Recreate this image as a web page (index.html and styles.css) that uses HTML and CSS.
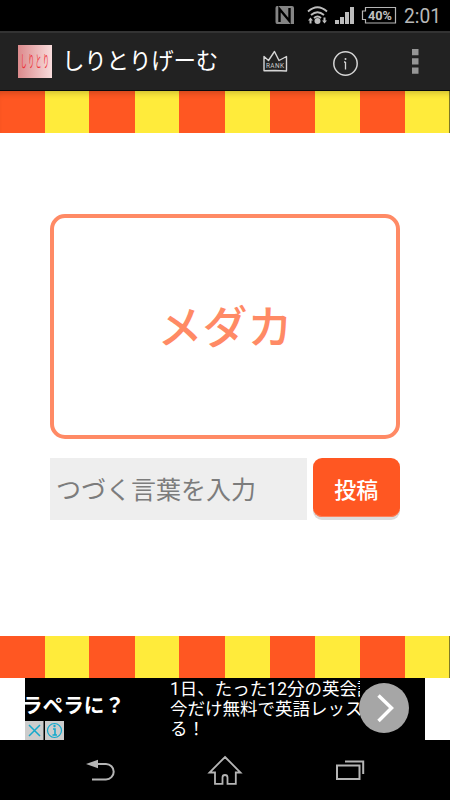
FILE: index.html
```html
<!DOCTYPE html>
<html lang="ja">
<head>
<meta charset="utf-8">
<title>しりとりげーむ</title>
<link rel="stylesheet" href="styles.css">
</head>
<body>
<div class="screen">
  <div class="status">
    <svg width="190" height="31" viewBox="0 0 190 31">
      <path d="M17 6H32Q34 6 34 8V24H17Q15.500 24 15.500 22V8Q15.500 6 17 6Z" fill="#858585"/>
      <path d="M19.500 22V9L29.500 21V8" fill="none" stroke="#000" stroke-width="2.400"/>
      <g fill="none" stroke="#bdbdbd" stroke-width="1.800"><path d="M48 11.500Q57.500 3 67 11.500M51 15Q57.500 9.500 64 15M54 18Q57.500 15 61 18"/></g>
      <circle cx="57.500" cy="21" r="3" fill="#bdbdbd"/>
      <path d="M50.500 17.500L53 20.500H51.500V23.500H49.500V20.500H48ZM64.500 23.500L62 20.500H63.500V17.500H65.500V20.500H67Z" fill="#bdbdbd"/>
      <path d="M75 20h4v4h-4zM80 17h4v7h-4zM85 12h4v12h-4zM90 7h4v17h-4z" fill="#bdbdbd"/>
      <path d="M105.500 7.500H135.500V23H105.500V19.500H102.500V11H105.500Z" fill="none" stroke="#b5b5b5" stroke-width="1.200"/>
      <text x="108" y="19.500" class="battery" textLength="24" lengthAdjust="spacingAndGlyphs">40%</text>
      <text x="144" y="23.300" class="clock" textLength="37" lengthAdjust="spacingAndGlyphs">2:01</text>
    </svg>
  </div>
  <header class="bar">
    <div class="logo"><svg width="34" height="33" viewBox="0 0 34 33"><text x="5" y="0" class="logo-text" textLength="50" transform="translate(0 22) scale(.56 1.500)">しりとり</text></svg></div>
    <h1 class="title">しりとりげーむ</h1>
    <svg class="actions" width="220" height="58" viewBox="0 0 220 58">
      <g fill="none" stroke="#d5d5d5" stroke-width="1.400" stroke-linejoin="round">
        <path d="M34 23.500L38.500 27.500L44.500 18.500L49 27.500L56.500 23.500V38L45 37.500L34 37.700Z"/>
        <circle cx="115.500" cy="30.500" r="11.700" stroke-width="1.500"/>
        <path d="M115.500 29V36.500M114 29H115.500" stroke-width="1.300"/>
      </g>
      <circle cx="115.500" cy="26" r="1" fill="#d5d5d5"/>
      <text x="36" y="35" class="rank" textLength="18">RANK</text>
      <path d="M182 16h6.500v6.300H182zM182 25.200h6.500v6.300H182zM182 34.500h6.500v6.300H182z" fill="#969696"/>
    </svg>
  </header>
  <div class="stripes shaded"></div>
  <main class="game">
    <div class="word">メダカ</div>
    <div class="entry">
      <div class="field">つづく言葉を入力</div>
      <button class="send">投稿</button>
    </div>
  </main>
  <div class="stripes"></div>
  <div class="ad">
    <div class="ad-left">
      <div class="ad-head">ラペラに？</div>
      <svg class="badges" width="39" height="19" viewBox="0 0 39 19">
        <path d="M0 0h18.500v19H0zM20 0h19v19H20z" fill="#ccc"/>
        <g fill="none" stroke="#13a9cc" stroke-width="1.500"><path d="M4 4L15 15M15 4L4 15"/><circle cx="29.500" cy="9.500" r="7" stroke-width="1.200"/><path d="M28 8H30V14M27.500 14H32" stroke-width="1.600"/></g>
        <circle cx="29.500" cy="5" r="1.200" fill="#13a9cc"/>
      </svg>
    </div>
    <div class="ad-copy">1日、たった12分の英会話<br>今だけ無料で英語レッスン<br>る！</div>
    <svg class="ad-go" width="50" height="50" viewBox="0 0 50 50"><circle cx="25" cy="25" r="25" fill="#a6a6a6"/><path d="M19.500 12.500L32.500 25L19.500 38" fill="none" stroke="#fff" stroke-width="3.500"/></svg>
  </div>
  <nav class="nav">
    <svg width="450" height="60" viewBox="0 0 450 60">
      <g fill="none" stroke="#b5b5b5" stroke-width="2">
        <path d="M96 24H106A7.700 7.700 0 0 1 106 39.400H92"/>
        <path d="M225 17L240.500 32.500H235.800V43.800H227.500V37.500Q227.500 35 225 35Q222.500 35 222.500 37.500V43.800H215V32.500H209.500Z" stroke-width="1.800"/>
        <path d="M337 25.500H359.500V39H337ZM345 21.500H363.200V34"/>
      </g>
      <path d="M86 24L98 19.800V28.200Z" fill="#b5b5b5"/>
    </svg>
  </nav>
</div>
</body>
</html>
```
FILE: styles.css
```css
* { box-sizing: border-box; }
body { margin: 0; background: #fff; font-family: Roboto, "Noto Sans CJK JP", sans-serif; }
svg { display: block; flex: none; }
.screen { width: 450px; height: 800px; display: flex; flex-direction: column; overflow: hidden; }
.status { height: 31px; background: #000; display: flex; justify-content: flex-end; }
.battery { font: 700 12px Roboto, sans-serif; fill: #c0c0c0; }
.clock { font: 400 20.500px Roboto, sans-serif; fill: #b8b8b8; }
.bar { height: 60px; background: #222; border-top: 2px solid #333; border-bottom: 1px solid #07090d; display: flex; align-items: center; padding-left: 18px; }
.logo { width: 34px; height: 33px; margin-top: 0; background: linear-gradient(to right, #dc8a8c, #f8dcdc); }
.logo-text { font: 400 10.500px "Noto Sans CJK JP", sans-serif; fill: #ee3038; }
.rank { font: 400 6.500px Roboto, sans-serif; fill: #c8c8c8; }
.title { margin: 0 0 1px; padding-left: 10px; width: 178px; font-size: 22.500px; font-weight: 400; line-height: 32px; color: #fff; white-space: nowrap; letter-spacing: -.2px; }
.stripes { height: 42px; flex: none; background: linear-gradient(to right, transparent 449px, #807a25 449px), repeating-linear-gradient(to right, #ff5722 0 44.600px, #ffeb3b 44.600px 89.500px, #ff5722 89.500px 90px); }
.shaded { box-shadow: inset 0 6px 6px -4px rgba(0, 0, 0, .2); }
.game { height: 503px; padding: 81px 50px 0; }
.word { height: 225px; border: 4px solid #ff8a65; border-radius: 15px; color: #ff8a65; font-size: 45px; font-weight: 500; line-height: 221px; text-align: center; }
.entry { display: flex; gap: 6px; margin-top: 19px; }
.field { width: 256.500px; height: 62px; background: #eee; color: #7c7c7c; padding-left: 6px; font-size: 25px; line-height: 65px; white-space: nowrap; }
.send { width: 87.500px; height: 59px; padding: 0; border: 0; border-radius: 9px; background: #ff5722; box-shadow: 0 3px 0 #dcdcdc, inset 0 -1px 0 #ff8059; color: #fff; font: 500 22px/60px "Noto Sans CJK JP", sans-serif; }
.ad { height: 62px; margin: 0 25px; background: #000; color: #fff; display: flex; position: relative; overflow: hidden; }
.ad-left { width: 145px; padding-top: 13px; }
.ad-head { margin-left: -3px; font-size: 20.600px; font-weight: 700; line-height: 30px; white-space: nowrap; }
.ad-copy { width: 190px; padding-top: 1px; font-size: 17.500px; line-height: 20px; white-space: nowrap; overflow: hidden; }
.ad-go { position: absolute; left: 334px; top: 5px; }
.nav { height: 60px; background: #000; }
```
